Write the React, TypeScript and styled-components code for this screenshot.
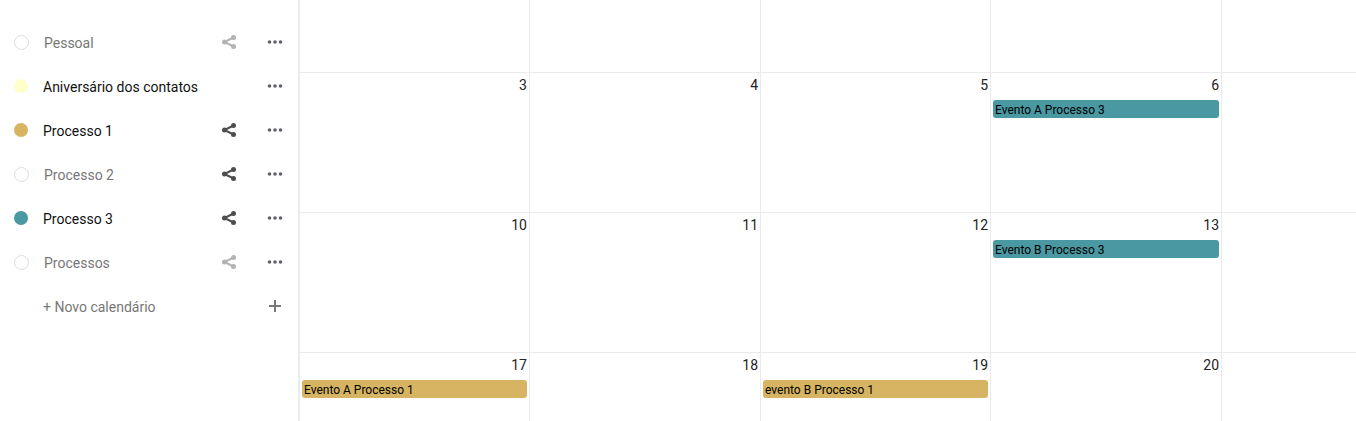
import React from 'react';
import styled, { createGlobalStyle } from 'styled-components';

const GlobalStyle = createGlobalStyle`
  *, *::before, *::after { box-sizing: border-box; }
  body {
    margin: 0;
    background: #fff;
    color: #222;
    font-family: Roboto, "Open Sans", sans-serif;
    font-size: 14px;
    line-height: 20px;
  }
  button { font: inherit; color: inherit; background: none; border: 0; padding: 0; cursor: pointer; }
`;

const Shell = styled.div`
  display: flex;
  height: 100vh;
  overflow: hidden;
`;

const Sidebar = styled.aside`
  flex: 0 0 300px;
  padding-top: 20px;
  border-right: 2px solid #ebebeb;
`;

const CalendarList = styled.ul`
  list-style: none;
  margin: 0;
  padding: 0;
`;

const CalendarRow = styled.li`
  display: flex;
  align-items: center;
  height: 44px;
`;

const CalendarToggle = styled.button<{ $active: boolean }>`
  flex: 1;
  display: flex;
  align-items: center;
  gap: 15px;
  height: 44px;
  padding-left: 14px;
  text-align: left;
  white-space: nowrap;
  color: ${(p) => (p.$active ? '#111' : '#777')};
`;

const Label = styled.span`
  padding-top: 2px;
`;

const Dot = styled.span<{ $color?: string }>`
  flex: none;
  width: ${(p) => (p.$color ? 14 : 15)}px;
  height: ${(p) => (p.$color ? 14 : 15)}px;
  border-radius: 50%;
  border: ${(p) => (p.$color ? '0' : '1px solid #ddd')};
  background: ${(p) => p.$color ?? 'transparent'};
`;

const NewCalendarButton = styled.button`
  flex: 1;
  display: flex;
  align-items: center;
  justify-content: space-between;
  height: 44px;
  padding: 0 15px 0 43px;
  color: #777;
`;

const IconButton = styled.button<{ $color: string }>`
  display: flex;
  align-items: center;
  justify-content: center;
  width: 46px;
  height: 44px;
  color: ${(p) => p.$color};
`;

const Month = styled.main`
  flex: 1;
  min-width: 0;
`;

const MonthTable = styled.table`
  width: 100%;
  table-layout: fixed;
  border-collapse: separate;
  border-spacing: 0;
`;

const DayColumn = styled.col<{ $width?: string }>`
  width: ${(p) => p.$width ?? 'auto'};
`;

const Week = styled.tr<{ $height: number }>`
  height: ${(p) => p.$height}px;
`;

const Day = styled.td`
  padding: 2px 2px 0;
  vertical-align: top;
  border-right: 1px solid #ebebeb;
  border-top: 1px solid #ebebeb;
  &:last-child { border-right: 0; }
  tr:first-child > & { border-top: 0; }
`;

const DayNumber = styled.div`
  text-align: right;
  height: 25px;
`;

const EventLink = styled.a<{ $color: string }>`
  display: block;
  height: 18px;
  padding: 0 2px;
  border-radius: 3px;
  background: ${(p) => p.$color};
  color: #000;
  font-size: 12px;
  line-height: 20px;
  text-decoration: none;
  white-space: nowrap;
  overflow: hidden;
`;

const GOLD = '#d6b461';
const TEAL = '#4a98a2';

const ShareIcon = () => (
  <svg width="16" height="16" viewBox="0 0 16 16" aria-hidden="true">
    <path d="M12.5 3.5 3.5 8l9 4.5" fill="none" stroke="currentColor" strokeWidth="2" />
    <circle cx="3.5" cy="8" r="2.5" fill="currentColor" />
    <circle cx="12.5" cy="3.5" r="2.5" fill="currentColor" />
    <circle cx="12.5" cy="12.5" r="2.5" fill="currentColor" />
  </svg>
);

const MoreIcon = () => (
  <svg width="16" height="16" viewBox="0 0 16 16" fill="currentColor" aria-hidden="true">
    <circle cx="2.5" cy="8" r="1.8" />
    <circle cx="8" cy="8" r="1.8" />
    <circle cx="13.5" cy="8" r="1.8" />
  </svg>
);

const PlusIcon = () => (
  <svg width="16" height="16" viewBox="0 0 16 16" fill="currentColor" aria-hidden="true">
    <path d="M7 2h2v5h5v2H9v5H7V9H2V7h5z" />
  </svg>
);

type Calendar = { name: string; color?: string; share?: 'idle' | 'shared' };

const calendars: Calendar[] = [
  { name: 'Pessoal', share: 'idle' },
  { name: 'Aniversário dos contatos', color: '#ffffca' },
  { name: 'Processo 1', color: GOLD, share: 'shared' },
  { name: 'Processo 2', share: 'shared' },
  { name: 'Processo 3', color: TEAL, share: 'shared' },
  { name: 'Processos', share: 'idle' },
];

type DayData = { day?: number; event?: string; color?: string };

const weeks: { height: number; days: DayData[] }[] = [
  { height: 72, days: [{}, {}, {}, {}, {}] },
  {
    height: 140,
    days: [{ day: 3 }, { day: 4 }, { day: 5 }, { day: 6, event: 'Evento A Processo 3', color: TEAL }, {}],
  },
  {
    height: 140,
    days: [{ day: 10 }, { day: 11 }, { day: 12 }, { day: 13, event: 'Evento B Processo 3', color: TEAL }, {}],
  },
  {
    height: 140,
    days: [
      { day: 17, event: 'Evento A Processo 1', color: GOLD },
      { day: 18 },
      { day: 19, event: 'evento B Processo 1', color: GOLD },
      { day: 20 },
      {},
    ],
  },
];

export default function App() {
  return (
    <>
      <GlobalStyle />
      <Shell>
        <Sidebar>
          <CalendarList>
            {calendars.map((c) => (
              <CalendarRow key={c.name}>
                <CalendarToggle $active={!!c.color} aria-pressed={!!c.color}>
                  <Dot $color={c.color} />
                  <Label>{c.name}</Label>
                </CalendarToggle>
                {c.share && (
                  <IconButton $color={c.share === 'shared' ? '#4d4d4d' : '#b3b3b3'} aria-label="Compartilhar">
                    <ShareIcon />
                  </IconButton>
                )}
                <IconButton $color="#5f6068" aria-label="Mais">
                  <MoreIcon />
                </IconButton>
              </CalendarRow>
            ))}
            <CalendarRow>
              <NewCalendarButton>
                <Label>+ Novo calendário</Label>
                <PlusIcon />
              </NewCalendarButton>
            </CalendarRow>
          </CalendarList>
        </Sidebar>
        <Month>
          <MonthTable>
            <colgroup>
              <DayColumn $width="21.78%" />
              <DayColumn $width="21.88%" />
              <DayColumn $width="21.78%" />
              <DayColumn $width="21.88%" />
              <DayColumn />
            </colgroup>
            <tbody>
              {weeks.map((w, i) => (
                <Week key={i} $height={w.height}>
                  {w.days.map((d, j) => (
                    <Day key={j}>
                      {d.day && <DayNumber>{d.day}</DayNumber>}
                      {d.event && (
                        <EventLink href="#" $color={d.color!}>
                          {d.event}
                        </EventLink>
                      )}
                    </Day>
                  ))}
                </Week>
              ))}
            </tbody>
          </MonthTable>
        </Month>
      </Shell>
    </>
  );
}
